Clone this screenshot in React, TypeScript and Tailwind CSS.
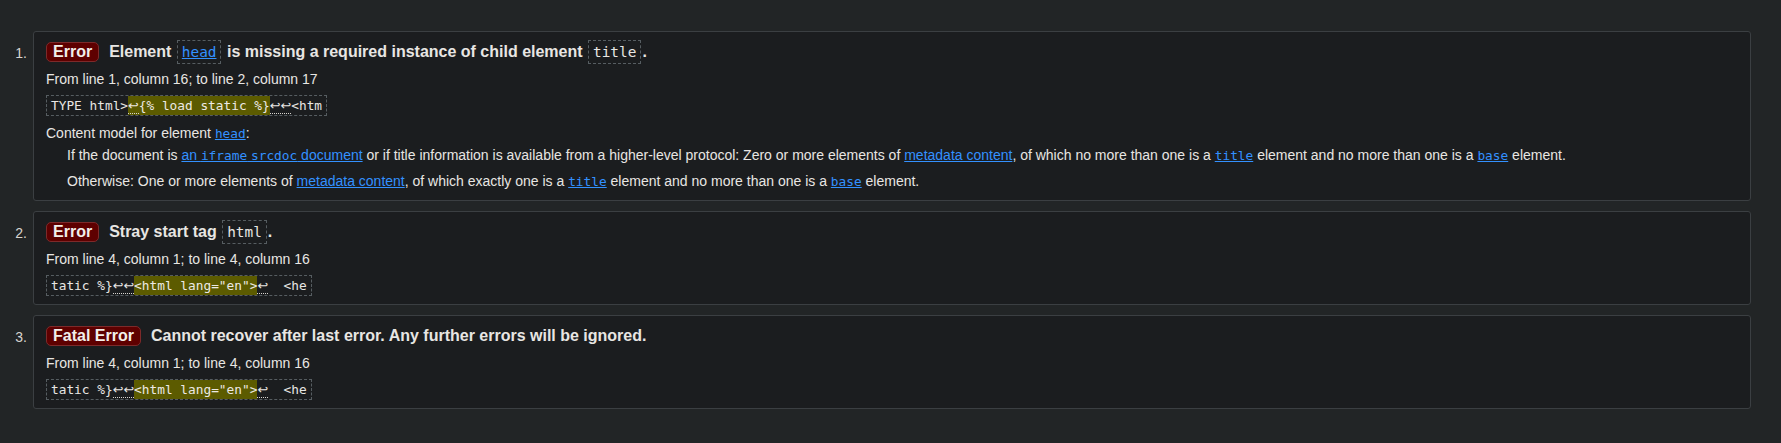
import React from "react";

const sans = "font-['Liberation_Sans',Arial,sans-serif]";
const mono = "font-['DejaVu_Sans_Mono','Liberation_Mono',monospace]";

function Badge({ children }: { children: React.ReactNode }) {
  return (
    <span className="mr-[10px] inline-block shrink-0 rounded-[5px] border border-[#7d2a2a] bg-[#5e0000] px-[6px] text-[16px] font-bold leading-[18px] text-[#f2efeb]">
      {children}
    </span>
  );
}

function Tag({ children }: { children: React.ReactNode }) {
  return (
    <code
      className={`${mono} mx-[1px] inline-block border border-dashed border-[#565d61] px-[4px] align-middle text-[14.4px] font-normal leading-[22px]`}
    >
      {children}
    </code>
  );
}

// line feed marker, drawn wider like the reference's fallback glyph
function Lf({ children = "↩" }: { children?: string }) {
  return (
    <span className="border-b border-dotted border-[#d8d4cf] font-['DejaVu_Sans',sans-serif] text-[12.8px] leading-none">
      {children}
    </span>
  );
}

function Extract({ children }: { children: React.ReactNode }) {
  return (
    <div className="mt-[8px] flex">
      <code
        className={`${mono} block whitespace-pre border border-dashed border-[#565d61] px-[4px] text-[12.8px] leading-[19px]`}
      >
        {children}
      </code>
    </div>
  );
}

function Mark({ children }: { children: React.ReactNode }) {
  return <span className="bg-[#5c5b00] py-[2px] text-[#ece9e4]">{children}</span>;
}

function Link({ children, code }: { children: React.ReactNode; code?: boolean }) {
  return (
    <a href="#" className={`${code ? mono + " text-[12.8px] leading-none" : ""} text-[#3391ff] underline`}>
      {children}
    </a>
  );
}

function Message({
  n,
  kind,
  children,
  location,
  extract,
  extra,
}: {
  n: number;
  kind: string;
  children: React.ReactNode;
  location: string;
  extract: React.ReactNode;
  extra?: React.ReactNode;
}) {
  return (
    <li className="flex">
      <span className="w-[33px] shrink-0 pr-[6px] pt-[14px] text-right text-[14px] leading-[16px] text-[#d8d4cf]">
        {n}.
      </span>
      <div className="flex-1 rounded-[3px] border border-[#3b3f42] bg-[#1b1d1f] px-[12px] pb-[8px] pt-[8px]">
        <div className="flex h-[24px] items-center">
          <Badge>{kind}</Badge>
          <span className="whitespace-nowrap text-[16px] font-bold leading-[24px]">{children}</span>
        </div>
        <p className="mt-[7px] text-[14px] leading-[16px]">{location}</p>
        <Extract>{extract}</Extract>
        {extra}
      </div>
    </li>
  );
}

export default function App() {
  return (
    <div className={`${sans} min-h-screen bg-[#222526] pb-[35px] pl-0 pr-[30px] pt-[31px] text-[#e8e6e3]`}>
      <ol className="flex flex-col gap-[10px]">
        <Message
          n={1}
          kind="Error"
          location="From line 1, column 16; to line 2, column 17"
          extract={
            <>
              TYPE html&gt;
              <Mark>
                <Lf />
                {"{% load static %}"}
              </Mark>
              <Lf>↩↩</Lf>&lt;htm
            </>
          }
          extra={
            <div className="mb-[3px] mt-[9px] text-[14px] leading-[16px]">
              <p>
                Content model for element <Link code>head</Link>:
              </p>
              <p className="ml-[21px] mt-[6px]">
                If the document is{" "}
                <Link>
                  an <span className={`${mono} text-[12.8px] leading-none`}>iframe</span>{" "}
                  <span className={`${mono} text-[12.8px] leading-none`}>srcdoc</span> document
                </Link>{" "}
                or if title information is available from a higher-level protocol: Zero or more elements of{" "}
                <Link>metadata content</Link>, of which no more than one is a <Link code>title</Link> element and
                no more than one is a <Link code>base</Link> element.
              </p>
              <p className="ml-[21px] mt-[10px]">
                Otherwise: One or more elements of <Link>metadata content</Link>, of which exactly one is a{" "}
                <Link code>title</Link> element and no more than one is a <Link code>base</Link> element.
              </p>
            </div>
          }
        >
          Element{" "}
          <Tag>
            <Link code>
              <span className="text-[14.4px]">head</span>
            </Link>
          </Tag>{" "}
          is missing a required instance of child element <Tag>title</Tag>.
        </Message>
        <Message
          n={2}
          kind="Error"
          location="From line 4, column 1; to line 4, column 16"
          extract={
            <>
              tatic %{"}"}
              <Lf>↩↩</Lf>
              <Mark>&lt;html lang="en"&gt;</Mark>
              <Lf />
              {"  <he"}
            </>
          }
        >
          Stray start tag <Tag>html</Tag>.
        </Message>
        <Message
          n={3}
          kind="Fatal Error"
          location="From line 4, column 1; to line 4, column 16"
          extract={
            <>
              tatic %{"}"}
              <Lf>↩↩</Lf>
              <Mark>&lt;html lang="en"&gt;</Mark>
              <Lf />
              {"  <he"}
            </>
          }
        >
          Cannot recover after last error. Any further errors will be ignored.
        </Message>
      </ol>
    </div>
  );
}
